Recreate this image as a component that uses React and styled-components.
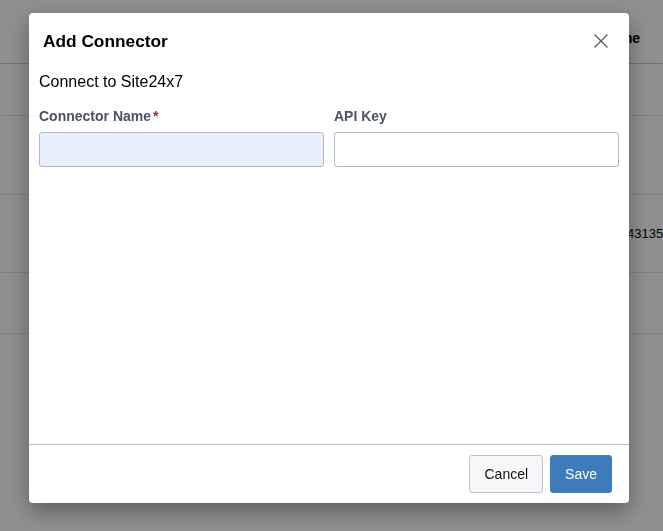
import styled, { createGlobalStyle } from "styled-components";
import { X } from "lucide-react";

const GlobalStyle = createGlobalStyle`
  html, body {
    margin: 0;
    padding: 0;
    background: #ffffff;
    font-family: "Liberation Sans", Arial, sans-serif;
    overflow: hidden;
  }
  * {
    box-sizing: border-box;
  }
`;

const rows = [
  { height: 52, cell: "" },
  { height: 79, cell: "" },
  { height: 78, cell: "43135" },
  { height: 61, cell: "" },
];

function App() {
  return (
    <>
      <GlobalStyle />
      <Page>
        <TableHead>
          <HeadCell />
          <HeadCell>Name</HeadCell>
        </TableHead>
        {rows.map((row, i) => (
          <TableRow key={i} style={{ height: row.height }}>
            <Cell />
            <Cell>{row.cell}</Cell>
          </TableRow>
        ))}
      </Page>

      <Overlay>
        <Modal>
          <ModalHeader>
            <Title>Add Connector</Title>
            <CloseButton aria-label="Close">
              <X size={24} strokeWidth={1.4} />
            </CloseButton>
          </ModalHeader>

          <ModalBody>
            <Intro>Connect to Site24x7</Intro>
            <FieldGrid>
              <Field>
                <Label>
                  Connector Name<Required>*</Required>
                </Label>
                <Input type="text" $filled />
              </Field>
              <Field>
                <Label>API Key</Label>
                <Input type="text" />
              </Field>
            </FieldGrid>
          </ModalBody>

          <ModalFooter>
            <Button>Cancel</Button>
            <Button $primary>Save</Button>
          </ModalFooter>
        </Modal>
      </Overlay>
    </>
  );
}

const Page = styled.div`
  width: 100%;
  height: 100vh;
  background: #ffffff;
  color: #000;
  font-size: 14px;
`;

const TableHead = styled.div`
  display: grid;
  grid-template-columns: 602px 1fr;
  height: 64px;
  border-bottom: 1px solid #c3ced9;
`;

const HeadCell = styled.div`
  display: flex;
  align-items: center;
  padding-top: 12px;
  font-weight: bold;
  font-size: 14px;
  white-space: nowrap;
`;

const TableRow = styled.div`
  display: grid;
  grid-template-columns: 627px 1fr;
  border-bottom: 1px solid #e3e3e3;
`;

const Cell = styled.div`
  display: flex;
  align-items: center;
  font-size: 13px;
  white-space: nowrap;
`;

const Overlay = styled.div`
  position: fixed;
  inset: 0;
  background: rgba(0, 0, 0, 0.44);
  padding: 13px 0 0 29px;
`;

const Modal = styled.div`
  width: 600px;
  height: 490px;
  display: flex;
  flex-direction: column;
  background: #ffffff;
  border-radius: 4px;
  box-shadow: 0 8px 22px rgba(0, 0, 0, 0.35);
`;

const ModalHeader = styled.div`
  display: flex;
  align-items: center;
  justify-content: space-between;
  padding: 16px 16px 12px 14px;
`;

const Title = styled.h2`
  margin: 0;
  font-size: 17.3px;
  line-height: 20px;
  font-weight: bold;
  color: #000;
`;

const CloseButton = styled.button`
  display: flex;
  align-items: center;
  justify-content: center;
  width: 24px;
  height: 24px;
  padding: 0;
  border: none;
  background: none;
  color: #5a5a5a;
  cursor: pointer;
`;

const ModalBody = styled.div`
  flex: 1;
  padding: 7px 10px 0;
`;

const Intro = styled.p`
  margin: 0 0 15px;
  font-size: 16px;
  line-height: 20px;
  color: #000;
`;

const FieldGrid = styled.div`
  display: grid;
  grid-template-columns: 1fr 1fr;
  gap: 10px;
`;

const Field = styled.div`
  display: flex;
  flex-direction: column;
  gap: 7px;
`;

const Label = styled.label`
  font-size: 14px;
  line-height: 18px;
  font-weight: bold;
  color: #4a5263;
`;

const Required = styled.span`
  margin-left: 2px;
  color: #b0203a;
`;

const Input = styled.input`
  height: 35px;
  width: 100%;
  padding: 0 10px;
  font-size: 14px;
  font-family: inherit;
  border: 1px solid #aeb9c6;
  border-radius: 3px;
  background: ${(p) => (p.$filled ? "#e8f0fe" : "#ffffff")};
  outline: none;
`;

const ModalFooter = styled.div`
  display: flex;
  justify-content: flex-end;
  gap: 7px;
  padding: 10px 17px 10px;
  border-top: 1px solid #b4c3cf;
`;

const Button = styled.button`
  height: 38px;
  padding: 0 14px;
  font-family: "Liberation Sans", Arial, sans-serif;
  font-size: 14px;
  border-radius: 3px;
  cursor: pointer;
  color: ${(p) => (p.$primary ? "#ffffff" : "#111")};
  background: ${(p) => (p.$primary ? "#3e7bbd" : "#f6f7f9")};
  border: 1px solid ${(p) => (p.$primary ? "#3e7bbd" : "#bcc5cf")};
`;

export default App;
